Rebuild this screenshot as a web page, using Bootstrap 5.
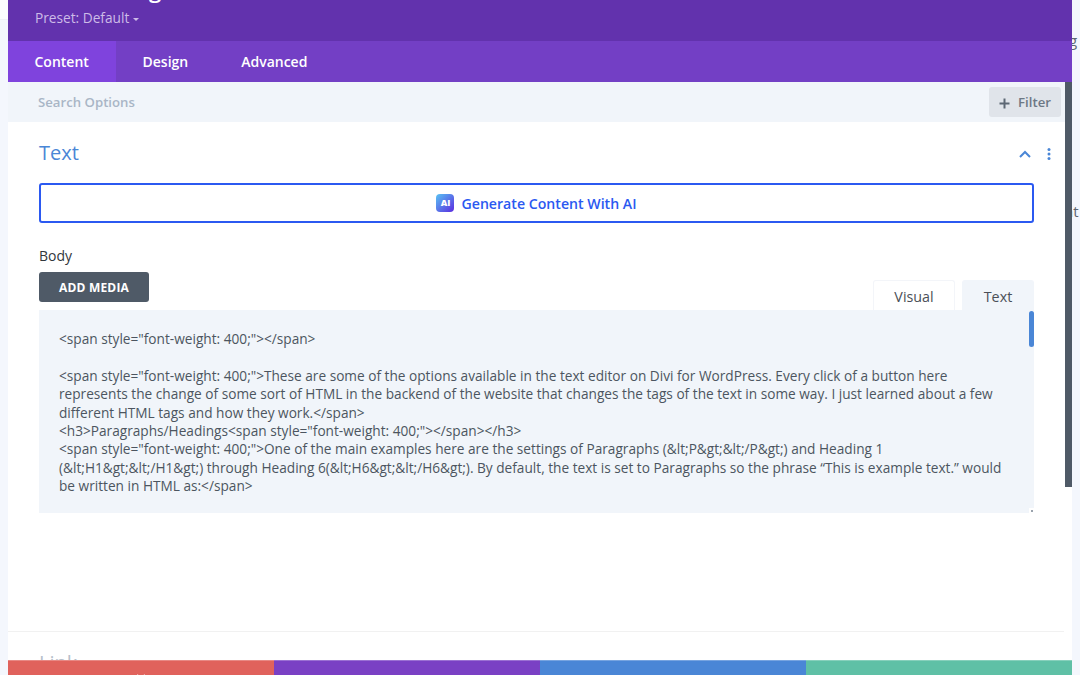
<!DOCTYPE html>
<html lang="en">
<head>
    <meta charset="UTF-8">
    <meta name="viewport" content="width=device-width, initial-scale=1.0">
    <title>Text Settings</title>
    <link href="https://cdn.jsdelivr.net/npm/bootstrap@5.3.0/dist/css/bootstrap.min.css" rel="stylesheet">
    <style>
        html, body { height: 100%; overflow: hidden; }
        body { font-family: "Open Sans", "Liberation Sans", sans-serif; background: #f4f7fd; color: #32373c; }
        .page-wrap { height: 675px; }
        .side-strip { width: 8px; flex: none; overflow: hidden; }
        .strip-top { height: 20px; background: #fbfcfe; border-bottom: 1px solid #eef1f6; }
        .strip-text { font-size: 15px; color: #5d6670; white-space: nowrap; line-height: 20px; }
        .strip-g { margin: 30px 0 0 -3px; }
        .strip-nt { margin: 151px 0 0 -8px; }
        .modal-box { width: 1064px; flex: none; background: #fff; overflow: hidden; position: relative; }
        .head-bar { height: 41px; background: #6232ad; overflow: hidden; padding-left: 27px; }
        .head-title { font-size: 22px; font-weight: 600; color: #fff; line-height: 30px; margin: -26px 0 0; white-space: nowrap; }
        .preset-link { font-size: 13.7px; color: #cdbbe8; line-height: 18px; margin-top: 5px; font-weight: 500; }
        .preset-caret { display: inline-block; width: 0; height: 0; border: 3px solid transparent; border-top: 3.5px solid #cdbbe8; border-bottom: 0; margin-left: 4px; vertical-align: 2px; }
        .tab-bar { height: 41px; background: #733fc5; }
        .tab-item { font-size: 14px; font-weight: 600; color: #fff; padding: 0 26.5px; line-height: 41px; text-decoration: none; }
        .tab-item.is-on { background: #7f43dd; width: 108px; }
        .search-bar { height: 40px; background: #f1f5fa; padding: 5px 4px 5px 30px; margin-right: 7px; }
        .search-text { font-size: 13.2px; font-weight: 600; color: #a9b6c6; padding-top: 2px; }
        .filter-btn { width: 72px; height: 30px; background: #e0e4ea; border: 0; border-radius: 3px; font-size: 13.2px; font-weight: 600; color: #6d7885; padding: 2px 0 0; }
        .options-pane { height: 538px; overflow: hidden; position: relative; }
        .scroll-thumb { position: absolute; right: 0; top: 82px; width: 7px; height: 405px; background: #4f5a67; }
        .toggle-head { padding: 0 21px 0 31px; height: 61px; }
        .toggle-title { font-size: 20px; font-weight: 400; color: #4a86d6; margin: 0; line-height: 27px; }
        .toggle-icons { padding-top: 3px; }
        .ai-btn { margin: 0 30px 0 31px; width: 995px; height: 40px; background: #fff; border: 2px solid #2b59f1; border-radius: 3px; color: #2b59f1; font-size: 14.15px; font-weight: 600; padding: 0; }
        .ai-label { padding-top: 2px; margin-left: -1px; }
        .ai-icon { width: 18px; height: 18px; border-radius: 4px; background: linear-gradient(135deg, #59c3f3, #5a2be0); color: #fff; font-size: 9px; font-weight: 800; line-height: 18px; text-align: center; }
        .body-field { padding: 23px 30px 0 31px; }
        .body-label { font-size: 14px; font-weight: 500; line-height: 20px; display: block; margin-bottom: 6px; }
        .editor-row { width: 995px; height: 38px; }
        .media-btn { width: 110px; height: 30px; background: #4f5a67; border: 0; border-radius: 3px; color: #fff; font-size: 12px; font-weight: 700; letter-spacing: .2px; padding: 2px 0 0; }
        .editor-tab { height: 30px; width: 82px; font-size: 14.3px; font-weight: 500; line-height: 31px; text-align: center; color: #4a4f57; border: 1px solid #f3f5f9; border-bottom: 0; border-radius: 3px 3px 0 0; background: #fff; margin-left: 7px; }
        .editor-tab.tab-text { width: 72px; background: #f1f5fa; border-color: #f1f5fa; }
        .editor-wrap { position: relative; width: 995px; }
        .code-area { display: block; width: 995px; height: 203px; background: #f1f5fa; border: 0; outline: 0; padding: 20px 20px 0; font-family: inherit; font-size: 13.67px; font-weight: 500; line-height: 18.4px; color: #4c5560; overflow: hidden; resize: none; }
        .blue-thumb { position: absolute; right: 0; top: 1px; width: 5px; height: 36px; background: #4a86d6; border-radius: 3px; }
        .resize-grip { position: absolute; right: 0; bottom: 0; width: 5px; height: 5px; background: #fff; }
        .resize-grip::after { content: ""; position: absolute; right: 1px; bottom: 1px; width: 2px; height: 2px; background: #9aa3ad; }
        .field-rule { position: absolute; left: 0; right: 8px; top: 509px; border-top: 1px solid #f1f1f1; }
        .link-title { position: absolute; left: 31px; top: 527px; font-size: 20px; color: #b7bfcb; line-height: 27px; }
        .foot-bar { height: 15px; position: relative; z-index: 2; }
        .foot-cell { flex: 1 1 0; padding-top: 13px; border-top: 1px solid rgba(255,255,255,.25); overflow: hidden; }
        .foot-red { background: #e0625c; }
        .foot-purple { background: #7a40c4; }
        .foot-blue { background: #4a86d6; }
        .foot-green { background: #5fc0a6; }
    </style>
</head>
<body>
    <div class="page-wrap d-flex">
        <div class="side-strip"><div class="strip-top"></div></div>

        <div class="modal-box d-flex flex-column">
            <div class="head-bar">
                <h2 class="head-title">Text Settings</h2>
                <div class="preset-link">Preset: Default<span class="preset-caret"></span></div>
            </div>
            <nav class="tab-bar d-flex">
                <a class="tab-item is-on" href="#">Content</a>
                <a class="tab-item" href="#">Design</a>
                <a class="tab-item" href="#">Advanced</a>
            </nav>
            <div class="search-bar d-flex align-items-center justify-content-between">
                <span class="search-text">Search Options</span>
                <button class="filter-btn d-flex align-items-center justify-content-center gap-2" type="button">
                    <svg width="11" height="11" viewBox="0 0 11 11"><path d="M5.5 0.5v10M0.5 5.5h10" stroke="#5d6875" stroke-width="2"/></svg>
                    <span>Filter</span>
                </button>
            </div>

            <div class="options-pane">
                <div class="toggle-head d-flex justify-content-between align-items-center">
                    <h3 class="toggle-title">Text</h3>
                    <div class="toggle-icons d-flex align-items-center gap-3">
                        <svg width="12" height="8" viewBox="0 0 12 8"><path d="M1 7l5-5 5 5" fill="none" stroke="#4a86d6" stroke-width="2"/></svg>
                        <svg width="4" height="12" viewBox="0 0 4 12"><circle cx="2" cy="1.5" r="1.5" fill="#4a86d6"/><circle cx="2" cy="6" r="1.5" fill="#4a86d6"/><circle cx="2" cy="10.5" r="1.5" fill="#4a86d6"/></svg>
                    </div>
                </div>

                <button class="ai-btn d-flex align-items-center justify-content-center gap-2" type="button">
                    <span class="ai-icon">AI</span>
                    <span class="ai-label">Generate Content With AI</span>
                </button>

                <div class="body-field">
                    <label class="body-label">Body</label>
                    <div class="editor-row d-flex justify-content-between align-items-start">
                        <button class="media-btn" type="button">ADD MEDIA</button>
                        <div class="d-flex align-self-end">
                            <div class="editor-tab">Visual</div>
                            <div class="editor-tab tab-text">Text</div>
                        </div>
                    </div>
                    <div class="editor-wrap">
                        <textarea class="code-area" readonly>&lt;span style="font-weight: 400;"&gt;&lt;/span&gt;

&lt;span style="font-weight: 400;"&gt;These are some of the options available in the text editor on Divi for WordPress. Every click of a button here represents the change of some sort of HTML in the backend of the website that changes the tags of the text in some way. I just learned about a few different HTML tags and how they work.&lt;/span&gt;
&lt;h3&gt;Paragraphs/Headings&lt;span style="font-weight: 400;"&gt;&lt;/span&gt;&lt;/h3&gt;
&lt;span style="font-weight: 400;"&gt;One of the main examples here are the settings of Paragraphs (&amp;lt;P&amp;gt;&amp;lt;/P&amp;gt;) and Heading 1 (&amp;lt;H1&amp;gt;&amp;lt;/H1&amp;gt;) through Heading 6(&amp;lt;H6&amp;gt;&amp;lt;/H6&amp;gt;). By default, the text is set to Paragraphs so the phrase “This is example text.” would be written in HTML as:&lt;/span&gt;</textarea>
                        <div class="blue-thumb"></div>
                        <div class="resize-grip"></div>
                    </div>
                </div>

                <div class="field-rule"></div>
                <div class="link-title">Link</div>
            </div>

            <div class="foot-bar d-flex">
                <div class="foot-cell foot-red text-center"><svg class="d-inline-block align-top" width="10" height="10" viewBox="0 0 10 10"><path d="M1 1l8 8M9 1l-8 8" stroke="#fff" stroke-width="2"/></svg></div>
                <div class="foot-cell foot-purple text-center"><svg class="d-inline-block align-top" width="12" height="10" viewBox="0 0 12 10"><path d="M3 4a4 4 0 0 1 7 2" fill="none" stroke="#fff" stroke-width="2"/></svg></div>
                <div class="foot-cell foot-blue text-center"><svg class="d-inline-block align-top" width="12" height="10" viewBox="0 0 12 10"><path d="M9 4a4 4 0 0 0-7 2" fill="none" stroke="#fff" stroke-width="2"/></svg></div>
                <div class="foot-cell foot-green"></div>
            </div>

            <div class="scroll-thumb"></div>
        </div>

        <div class="side-strip">
            <div class="strip-text strip-g">g</div>
            <div class="strip-text strip-nt">nt</div>
        </div>
    </div>
</body>
</html>
